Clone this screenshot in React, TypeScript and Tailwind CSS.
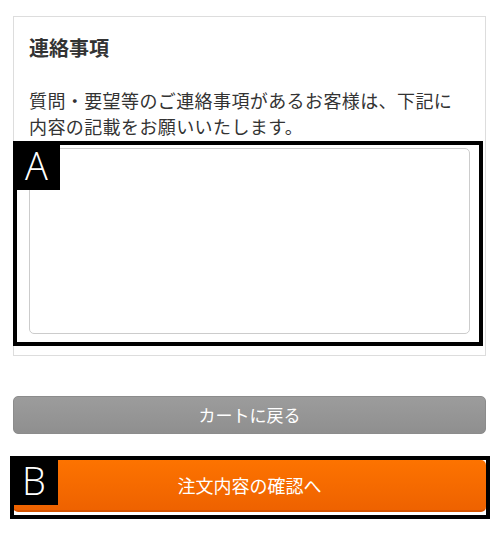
import React from 'react';

const App: React.FC = () => {
  return (
    <div className="relative w-[500px] h-[543px] bg-white text-[#333] font-['Noto_Sans_CJK_JP','Noto_Sans',sans-serif]">
      <div className="px-[13px] pt-4 pr-[14px]">
        {/* Contact card */}
        <div className="border border-[#dddddd] px-[15px] pt-4 pb-[21px]">
          <h2 className="text-[20px] leading-[30px] font-bold">連絡事項</h2>
          <p className="mt-6 text-[18px] leading-[26px] tracking-[0.4px]">
            質問・要望等のご連絡事項があるお客様は、下記に
            <br />
            内容の記載をお願いいたします。
          </p>
          <textarea className="mt-[9px] block w-full h-[186px] border border-[#cccccc] rounded-[5px] resize-none outline-none" />
        </div>

        {/* Buttons */}
        <button className="mt-10 w-full h-[38px] rounded-[5px] border border-[#8c8c8c] bg-gradient-to-b from-[#9c9c9c] to-[#8f8f8f] text-white text-[17px] flex items-center justify-center">
          カートに戻る
        </button>
        <button className="mt-[26px] w-full h-[52px] rounded-[5px] border-b-2 border-[#d75400] bg-gradient-to-b from-[#fd7300] to-[#ee6200] text-white text-[18px] flex items-center justify-center">
          注文内容の確認へ
        </button>
      </div>

      {/* Annotation A */}
      <div className="absolute left-[13px] top-[141px] w-[470px] h-[205px] border-4 border-black pointer-events-none">
        <div className="absolute -left-1 -top-1 w-[47px] h-[49px] bg-black text-white text-[38px] leading-[49px] font-light text-center font-['Open_Sans',sans-serif]">
          A
        </div>
      </div>

      {/* Annotation B */}
      <div className="absolute left-[10px] top-[456px] w-[480px] h-[63px] border-4 border-black pointer-events-none">
        <div className="absolute -left-1 -top-1 w-[48px] h-[49px] bg-black text-white text-[38px] leading-[49px] font-light text-center font-['Open_Sans',sans-serif]">
          B
        </div>
      </div>
    </div>
  );
};

export default App;
